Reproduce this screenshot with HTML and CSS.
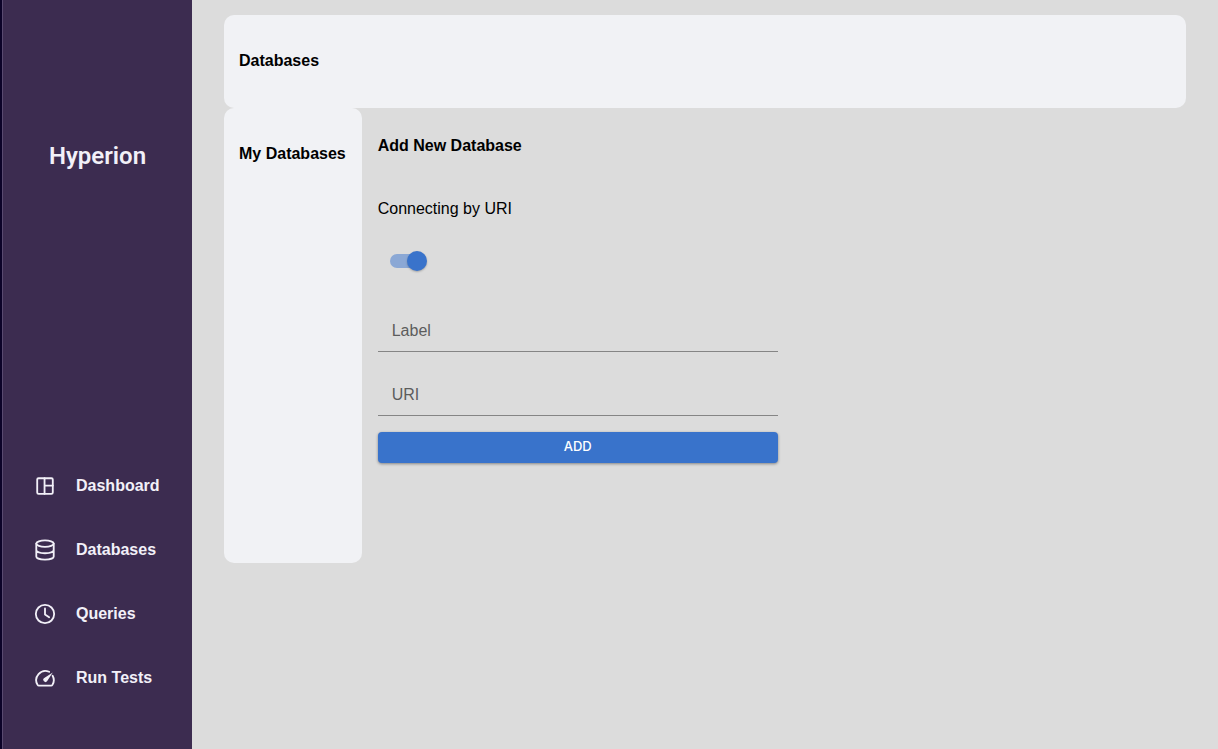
FILE: index.html
```html
<!DOCTYPE html>
<html lang="en">
<head>
<meta charset="utf-8">
<meta name="viewport" content="width=device-width, initial-scale=1">
<title>Hyperion</title>
<link rel="stylesheet" href="styles.css">
</head>
<body>
<div class="app">
  <aside class="sidebar">
    <h1 class="brand">Hyperion</h1>
    <nav class="nav">
      <a class="nav-link" href="#dashboard">
        <svg class="icon" viewBox="0 0 24 24" aria-hidden="true"><rect x="3.500" y="3.500" width="17" height="17" rx="1.500"/><path d="M11.500 3.500v17M11.500 11.500h9"/></svg>
        Dashboard
      </a>
      <a class="nav-link" href="#databases">
        <svg class="icon" viewBox="0 0 24 24" aria-hidden="true"><ellipse cx="12" cy="5" rx="9.500" ry="3.500"/><path d="M2.500 5v14c0 2 4 3.500 9.500 3.500s9.500-1.500 9.500-3.500V5M2.500 12c0 2 4 3.500 9.500 3.500s9.500-1.500 9.500-3.500"/></svg>
        Databases
      </a>
      <a class="nav-link" href="#queries">
        <svg class="icon" viewBox="0 0 24 24" aria-hidden="true"><circle cx="12" cy="12" r="10"/><path d="M12 6v6.500l4.500 3"/></svg>
        Queries
      </a>
      <a class="nav-link" href="#tests">
        <svg class="icon" viewBox="0 0 24 24" aria-hidden="true"><path d="M16.500 5.200A10 10 0 0 0 3.900 19.500c.3.500.8.800 1.400.8h13.400c.6 0 1.100-.3 1.400-.8a10 10 0 0 0 .2-10"/><path class="solid" d="M20.500 6l-6.100 9.300a2.300 2.300 0 1 1-3.200-3.200z"/></svg>
        Run Tests
      </a>
    </nav>
  </aside>
  <main class="content">
    <header class="page-header"><h2 class="heading">Databases</h2></header>
    <div class="columns">
      <section class="my-databases"><h2 class="heading">My Databases</h2></section>
      <form class="add-form">
        <h2 class="heading">Add New Database</h2>
        <label class="switch-label" for="by-uri">Connecting by URI</label>
        <input class="switch" id="by-uri" type="checkbox" role="switch" checked>
        <input class="field" type="text" placeholder="Label" aria-label="Label">
        <input class="field" type="text" placeholder="URI" aria-label="URI">
        <button class="add-button" type="button">ADD</button>
      </form>
    </div>
  </main>
</div>
</body>
</html>
```
FILE: styles.css
```css
* {
  box-sizing: border-box;
}

body {
  margin: 0;
  background: #dcdcdc;
  color: #000;
  font: 16px/20px "Liberation Sans", Arial, sans-serif;
}

.app {
  display: flex;
  min-height: 100vh;
  border-left: 2px solid #0c0328;
}

.sidebar {
  display: flex;
  flex: 0 0 190px;
  flex-direction: column;
  justify-content: space-between;
  padding: 140px 0 39px;
  border-left: 1px solid #594a70;
  background: #3c2c50;
  color: #f2f0f8;
}

.brand {
  margin: 0;
  font: 600 24px/32px Roboto, sans-serif;
  text-align: center;
}

.nav {
  display: flex;
  flex-direction: column;
}

.nav-link {
  display: flex;
  align-items: center;
  gap: 20px;
  height: 64px;
  padding-left: 31px;
  color: inherit;
  font-weight: 700;
  text-decoration: none;
}

.icon {
  width: 22px;
  height: 22px;
  fill: none;
  stroke: currentColor;
  stroke-width: 2;
  stroke-linecap: round;
  stroke-linejoin: round;
}

.icon .solid {
  fill: currentColor;
  stroke: none;
}

.content {
  flex: 1;
  padding: 15px 32px;
}

.heading {
  margin: 0;
  font-size: 16px;
  line-height: 20px;
}

.page-header,
.my-databases {
  border-radius: 10px;
  background: #f1f2f5;
}

.page-header {
  padding: 36px 16px 37px 15px;
}

.columns {
  display: flex;
  align-items: flex-start;
  gap: 16px;
}

.my-databases {
  min-height: 455px;
  padding: 36px 16px 36px 15px;
  white-space: nowrap;
}

.add-form {
  display: flex;
  flex: 0 1 400px;
  flex-direction: column;
  padding-top: 28px;
}

.switch-label {
  margin-top: 43px;
}

.switch {
  display: flex;
  align-items: center;
  justify-content: flex-end;
  width: 34px;
  height: 14px;
  margin: 35px 0 0 12px;
  border-radius: 7px;
  appearance: none;
  background: #8ba8d5;
  cursor: pointer;
}

.switch::before {
  flex: none;
  width: 20px;
  height: 20px;
  margin-right: -3px;
  border-radius: 50%;
  background: #3973cb;
  box-shadow: 0 1px 2px rgba(0, 0, 0, 0.25);
  content: "";
}

.switch:not(:checked) {
  justify-content: flex-start;
  background: #9e9e9e;
}

.field {
  width: 100%;
  height: 48px;
  margin: 36px 0 0;
  padding: 12px 14px 6px;
  border: 0;
  border-bottom: 1px solid #858585;
  border-radius: 0;
  outline: 0;
  background: transparent;
  color: #000;
  font: inherit;
}

.field + .field {
  margin-top: 16px;
}

.field::placeholder {
  color: #5c5c5c;
  opacity: 1;
}

.add-button {
  height: 31px;
  margin-top: 16px;
  padding: 0 10px 4px;
  border: 0;
  border-radius: 4px;
  background: #3973cb;
  box-shadow: 0 1px 3px rgba(0, 0, 0, 0.4);
  color: #fff;
  font: 500 13px/20px Inter, sans-serif;
  cursor: pointer;
}
```
